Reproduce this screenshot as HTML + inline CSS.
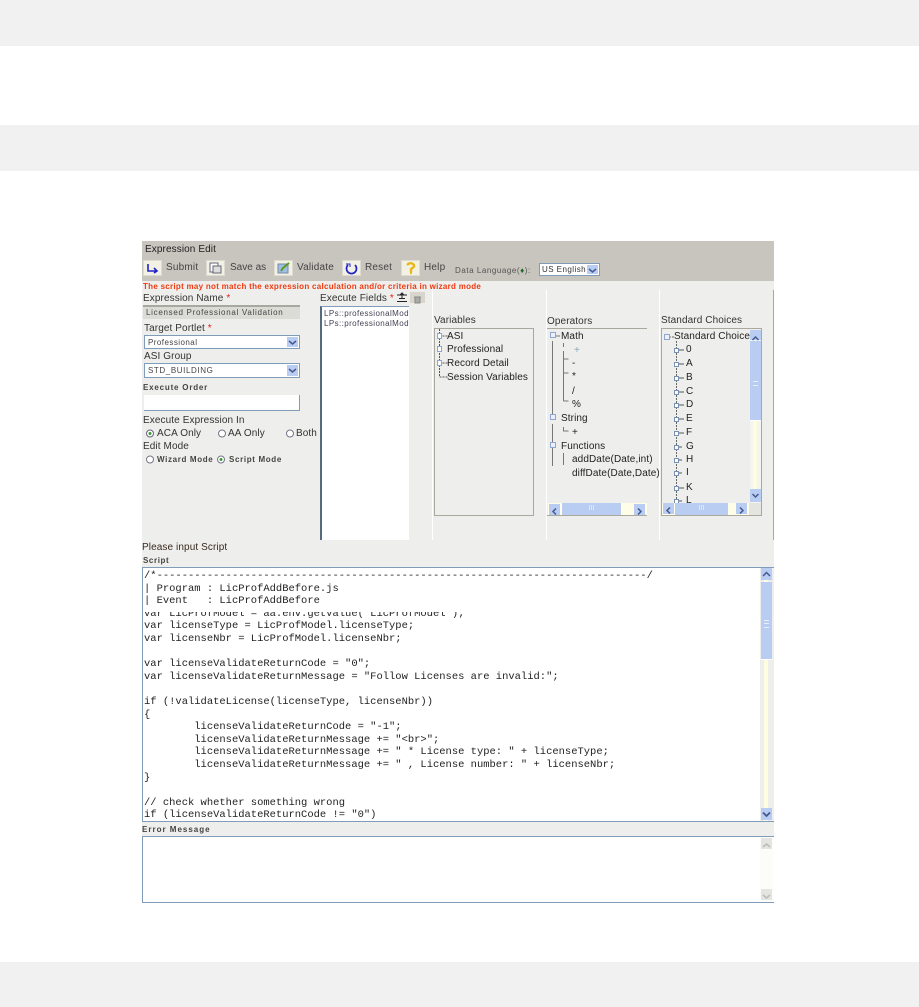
<!DOCTYPE html>
<html><head><meta charset="utf-8">
<style>
html,body{margin:0;padding:0;background:#fff}
body{width:919px;height:1007px;position:relative;overflow:hidden;font-family:"Liberation Sans",sans-serif;color:#333}
.a{position:absolute;white-space:nowrap}
.bar{position:absolute;left:0;width:919px;background:#f1f1f1}
.l{position:absolute;white-space:nowrap;font-size:10px;line-height:12px;color:#333;letter-spacing:.1px}
.s{font-size:8px;color:#444;letter-spacing:.45px}
.b{font-weight:bold;font-size:8px;letter-spacing:.8px;color:#444}
.sel{position:absolute;background:#fff;border:1px solid #7f9db9;box-sizing:border-box}
.arr{position:absolute;right:1px;top:1px;bottom:1px;width:11px;background:#b9ccf2}
.arr svg,.sb svg{position:absolute;left:0;top:0}
.mono{position:absolute;left:144px;font:10.47px/12.6px "Liberation Mono",monospace;color:#222;white-space:pre}
.t{position:absolute;white-space:nowrap;font-size:10px;line-height:12px;color:#222;letter-spacing:.1px}
.v{position:absolute;background:#fff;width:1px}
.btn{position:absolute;top:260px;width:19px;height:16px;background:#f3f1e4;border:1px solid #dedcd0;box-sizing:border-box}
.btn svg{position:absolute;left:0;top:0}
.tb{position:absolute;top:261px;font-size:10px;line-height:14px;color:#444;letter-spacing:.2px;white-space:nowrap}
</style></head><body>
<div class="bar" style="top:0;height:46px"></div>
<div class="bar" style="top:125px;height:46px"></div>
<div class="bar" style="top:962px;height:45px"></div>

<div class="a" style="left:142px;top:241px;width:632px;height:662px;background:#eeeeec"></div>
<div class="a" style="left:142px;top:241px;width:632px;height:40px;background:#c8c4be"></div>
<div class="l" style="left:145px;top:244px;color:#222">Expression Edit</div>

<div class="btn" style="left:143px"><svg width="17" height="14"><path d="M4 3v7h9M10 7l3 3-3 2" fill="none" stroke="#2222cc" stroke-width="1.6"/></svg></div>
<div class="tb" style="left:166px">Submit</div>
<div class="btn" style="left:206px"><svg width="17" height="14"><rect x="3" y="2" width="8" height="9" fill="#fff" stroke="#667"/><rect x="6" y="5" width="8" height="7" fill="#ddd" stroke="#667"/></svg></div>
<div class="tb" style="left:230px;letter-spacing:0">Save as</div>
<div class="btn" style="left:274px"><svg width="17" height="14"><rect x="3" y="3" width="10" height="9" fill="#9fc0e0" stroke="#78a"/><path d="M6 10l2-3 6-5" fill="none" stroke="#5a9a20" stroke-width="2"/></svg></div>
<div class="tb" style="left:297px">Validate</div>
<div class="btn" style="left:342px"><svg width="17" height="14"><path d="M5 4a5 5 0 1 0 7 0" fill="none" stroke="#2222cc" stroke-width="1.7"/><path d="M3 3h4v3" fill="none" stroke="#2222cc"/></svg></div>
<div class="tb" style="left:365px">Reset</div>
<div class="btn" style="left:401px"><svg width="17" height="14"><path d="M5 4q3-3 6-1t-2 5v3" fill="none" stroke="#e8b818" stroke-width="2.4"/><rect x="8" y="11" width="2" height="2" fill="#e8b818"/></svg></div>
<div class="tb" style="left:424px">Help</div>
<div class="a s" style="left:455px;top:265px;line-height:11px;color:#555;letter-spacing:.55px">Data Language(<b style="color:#1a6a2a">♦</b>):</div>
<div class="sel" style="left:539px;top:263px;width:61px;height:13px"><div class="a s" style="left:2px;top:0;line-height:11px;color:#333;width:45px;overflow:hidden">US English</div><div class="arr"><svg width="11" height="11"><path d="M2 4l3.500 3 3.500-3" fill="none" stroke="#445a90" stroke-width="1.500"/></svg></div></div>
<div class="a" style="left:143px;top:281px;font-size:8px;line-height:11px;font-weight:bold;color:#f03a10;letter-spacing:.28px">The script may not match the expression calculation and/or criteria in wizard mode</div>

<div class="l" style="left:143px;top:293px">Expression Name <span style="color:#e02020">*</span></div>
<div class="a s" style="left:143px;top:305px;width:157px;height:14px;background:#dcdcd6;border-top:2px solid #a8a8a0;box-sizing:border-box;padding-left:3px;line-height:12px;letter-spacing:.7px">Licensed Professional Validation</div>
<div class="l" style="left:144px;top:323px">Target Portlet <span style="color:#e02020">*</span></div>
<div class="sel" style="left:144px;top:335px;width:156px;height:14px"><div class="a s" style="left:3px;top:1px;line-height:11px">Professional</div><div class="arr"><svg width="11" height="12"><path d="M2 4l3.500 3 3.500-3" fill="none" stroke="#445a90" stroke-width="1.500"/></svg></div></div>
<div class="l" style="left:144px;top:351px">ASI Group</div>
<div class="sel" style="left:144px;top:363px;width:156px;height:15px"><div class="a s" style="left:3px;top:1px;line-height:12px;letter-spacing:.6px">STD_BUILDING</div><div class="arr"><svg width="11" height="12"><path d="M2 4l3.500 3 3.500-3" fill="none" stroke="#445a90" stroke-width="1.500"/></svg></div></div>
<div class="a b" style="left:143px;top:382px;line-height:11px">Execute Order</div>
<div class="a" style="left:144px;top:395px;width:156px;height:16px;background:#fff;border-right:1px solid #7f9db9;border-bottom:1px solid #7f9db9;box-sizing:border-box"></div>
<div class="l" style="left:143px;top:415px">Execute Expression In</div>
<svg class="a" style="left:145px;top:429px" width="160" height="9"><circle cx="5" cy="4.500" r="3.500" fill="#fff" stroke="#667"/><circle cx="5" cy="4.500" r="1.500" fill="#3a9a3a"/><circle cx="77" cy="4.500" r="3.500" fill="#fff" stroke="#778"/><circle cx="145" cy="4.500" r="3.500" fill="#fff" stroke="#778"/></svg>
<div class="l" style="left:157px;top:428px">ACA Only</div>
<div class="l" style="left:228px;top:428px">AA Only</div>
<div class="l" style="left:296px;top:428px">Both</div>
<div class="l" style="left:143px;top:441px">Edit Mode</div>
<svg class="a" style="left:145px;top:455px" width="90" height="9"><circle cx="5" cy="4.500" r="3.500" fill="#fff" stroke="#778"/><circle cx="76" cy="4.500" r="3.500" fill="#fff" stroke="#778"/><circle cx="76" cy="4.500" r="1.500" fill="#3a9a3a"/></svg>
<div class="a b" style="left:157px;top:454px;line-height:11px;letter-spacing:.65px">Wizard Mode</div>
<div class="a b" style="left:229px;top:454px;line-height:11px;letter-spacing:.65px">Script Mode</div>

<div class="l" style="left:320px;top:293px">Execute Fields <span style="color:#e02020">*</span></div>
<svg class="a" style="left:396px;top:292px" width="13" height="11"><path d="M1 3h10M1 9.500h10M3 6.500h6M6 1v5M4 3l2-2 2 2" fill="none" stroke="#222"/></svg>
<div class="a" style="left:410px;top:292px;width:15px;height:11px;background:#d8d6cc"><svg width="15" height="11"><path d="M5 3h5v6H5zM4 3h7" fill="#aaa" stroke="#888"/></svg></div>
<div class="a" style="left:320px;top:306px;width:89px;height:234px;background:#fff;border-left:2px solid #556a80;border-top:1px solid #7f9db9;box-sizing:border-box;overflow:hidden">
<div class="a s" style="left:2px;top:1px;line-height:12px;letter-spacing:.4px;color:#445">LPs::professionalModel.a</div>
<div class="a s" style="left:2px;top:11px;line-height:12px;letter-spacing:.4px;color:#445">LPs::professionalModel.b</div></div>

<div class="v" style="left:432px;top:290px;height:250px"></div>
<div class="v" style="left:546px;top:290px;height:250px"></div>
<div class="v" style="left:659px;top:290px;height:250px"></div>
<div class="a" style="left:773px;top:290px;width:1px;height:250px;background:#a8a8a0"></div>

<div class="l" style="left:434px;top:315px">Variables</div>
<div class="a" style="left:434px;top:328px;width:100px;height:188px;border:1px solid #a8a89c;box-sizing:border-box"></div>
<svg class="a" style="left:435px;top:329px" width="14" height="60"><path d="M4.500 0v48M4.500 7h8M4.500 34h8M4.500 48h8" fill="none" stroke="#555" stroke-dasharray="2 1"/><rect x="2.500" y="4.500" width="4" height="5" fill="#fff" stroke="#8aa8d0"/><rect x="2.500" y="17.500" width="4" height="5" fill="#fff" stroke="#8aa8d0"/><rect x="2.500" y="31.500" width="4" height="5" fill="#fff" stroke="#8aa8d0"/></svg>
<div class="t" style="left:447px;top:331px">ASI</div>
<div class="t" style="left:447px;top:344px">Professional</div>
<div class="t" style="left:447px;top:358px">Record Detail</div>
<div class="t" style="left:447px;top:372px">Session Variables</div>

<div class="l" style="left:547px;top:316px">Operators</div>
<div class="a" style="left:547px;top:328px;width:100px;height:188px;border-top:1px solid #a8a89c;border-bottom:1px solid #a8a89c;box-sizing:border-box"></div>
<svg class="a" style="left:548px;top:329px" width="30" height="146"><path d="M8 7h4M4.500 12v78M4.500 95v42M15.500 14v4M15.500 22v50M15.500 30h5M15.500 44h5M15.500 72h5M15.500 98v4h5M15.500 124v12" fill="none" stroke="#777"/><rect x="2.500" y="3.500" width="5" height="5" fill="#eef" stroke="#8aa8d0"/><rect x="2.500" y="85.500" width="5" height="5" fill="#eef" stroke="#8aa8d0"/><rect x="2.500" y="113.500" width="5" height="5" fill="#eef" stroke="#8aa8d0"/></svg>
<div class="t" style="left:561px;top:331px">Math</div>
<div class="t" style="left:574px;top:345px;color:#8ab">+</div>
<div class="t" style="left:572px;top:358px">-</div>
<div class="t" style="left:572px;top:371px">*</div>
<div class="t" style="left:572px;top:386px">/</div>
<div class="t" style="left:572px;top:399px">%</div>
<div class="t" style="left:561px;top:413px">String</div>
<div class="t" style="left:572px;top:427px">+</div>
<div class="t" style="left:561px;top:441px">Functions</div>
<div class="t" style="left:572px;top:454px">addDate(Date,int)</div>
<div class="t" style="left:572px;top:468px;width:87px;overflow:hidden">diffDate(Date,Date)</div>
<div class="a" style="left:548px;top:503px;width:99px;height:12px;background:#fffde8"></div>
<div class="a" style="left:549px;top:504px;width:11px;height:11px;background:#b9ccf2"><svg width="11" height="11"><path d="M7 2.500L4 5.500l3 3" fill="none" stroke="#445a90" stroke-width="1.500"/></svg></div>
<div class="a" style="left:561px;top:503px;width:61px;height:12px;background:#b9ccf2;border-left:1px solid #fff;border-right:1px solid #fff;box-sizing:border-box;text-align:center;font-size:7px;line-height:12px;color:#eef">III</div>
<div class="a" style="left:634px;top:504px;width:11px;height:11px;background:#b9ccf2"><svg width="11" height="11"><path d="M4 2.500L7 5.500l-3 3" fill="none" stroke="#445a90" stroke-width="1.500"/></svg></div>

<div class="l" style="left:661px;top:315px">Standard Choices</div>
<div class="a" style="left:661px;top:328px;width:101px;height:188px;border:1px solid #a8a89c;box-sizing:border-box;overflow:hidden">
<div class="t" style="left:12px;top:2px;width:80px;overflow:hidden">Standard Choices</div>
<div class="t" style="left:24px;top:15px">0</div>
<div class="t" style="left:24px;top:29px">A</div>
<div class="t" style="left:24px;top:43px">B</div>
<div class="t" style="left:24px;top:57px">C</div>
<div class="t" style="left:24px;top:70px">D</div>
<div class="t" style="left:24px;top:84px">E</div>
<div class="t" style="left:24px;top:98px">F</div>
<div class="t" style="left:24px;top:112px">G</div>
<div class="t" style="left:24px;top:125px">H</div>
<div class="t" style="left:24px;top:138px">I</div>
<div class="t" style="left:24px;top:153px">K</div>
<div class="t" style="left:24px;top:166px">L</div>
<svg class="a" style="left:0;top:0" width="24" height="176"><path d="M7 8h5M14.500 12v162" fill="none" stroke="#666" stroke-dasharray="2 1"/><path d="M17 21h5M17 35h5M17 49h5M17 63h5M17 76h5M17 90h5M17 104h5M17 118h3M17 131h3M17 144h3M17 159h5M17 172h3" fill="none" stroke="#555"/><path d="M12.500 19.500h4v4h-4zM12.500 33.500h4v4h-4zM12.500 47.500h4v4h-4zM12.500 61.500h4v4h-4zM12.500 74.500h4v4h-4zM12.500 88.500h4v4h-4zM12.500 102.500h4v4h-4zM12.500 116.500h4v4h-4zM12.500 129.500h4v4h-4zM12.500 142.500h4v4h-4zM12.500 157.500h4v4h-4zM12.500 170.500h4v4h-4z" fill="#fff" stroke="#7a90b0"/><rect x="2.500" y="5.500" width="5" height="5" fill="#eef" stroke="#8aa8d0"/></svg>
<div class="a" style="left:88px;top:1px;width:11px;height:173px;background:#f4f4f0"></div>
<div class="a" style="left:91px;top:90px;width:4px;height:70px;background:#fffde0"></div>
<div class="a" style="left:88px;top:1px;width:11px;height:10px;background:#b9ccf2"><svg width="11" height="10"><path d="M2.500 7L5.500 4l3 3" fill="none" stroke="#445a90" stroke-width="1.500"/></svg></div>
<div class="a" style="left:88px;top:12px;width:11px;height:80px;background:#b9ccf2;border-bottom:1px solid #fff;box-sizing:border-box"></div>
<div class="a" style="left:91px;top:52px;width:5px;height:5px;border-top:1px solid #e8eeff;border-bottom:1px solid #e8eeff;box-sizing:border-box"></div>
<div class="a" style="left:88px;top:160px;width:11px;height:13px;background:#b9ccf2"><svg width="11" height="13"><path d="M2.500 5l3 3 3-3" fill="none" stroke="#445a90" stroke-width="1.500"/></svg></div>
<div class="a" style="left:0;top:174px;width:99px;height:12px;background:#fffde8"></div>
<div class="a" style="left:1px;top:174px;width:11px;height:11px;background:#b9ccf2"><svg width="11" height="11"><path d="M7 2.500L4 5.500l3 3" fill="none" stroke="#445a90" stroke-width="1.500"/></svg></div>
<div class="a" style="left:13px;top:174px;width:53px;height:12px;background:#b9ccf2;text-align:center;font-size:7px;line-height:12px;color:#eef">III</div>
<div class="a" style="left:74px;top:174px;width:11px;height:11px;background:#b9ccf2"><svg width="11" height="11"><path d="M4 2.500L7 5.500l-3 3" fill="none" stroke="#445a90" stroke-width="1.500"/></svg></div>
<div class="a" style="left:87px;top:174px;width:12px;height:12px;background:#e4e4e0"></div>
</div>

<div class="l" style="left:142px;top:542px;color:#3a2a20">Please input Script</div>
<div class="a b" style="left:143px;top:555px;line-height:11px;letter-spacing:.6px">Script</div>

<div class="a" style="left:142px;top:567px;width:632px;height:255px;background:#fff;border:1px solid #7f9db9;border-right:0;box-sizing:border-box"></div>
<div class="a" style="left:142px;top:568px;width:620px;height:253px;overflow:hidden">
<div class="mono" style="left:2px;top:2px">/*------------------------------------------------------------------------------/
| Program : LicProfAddBefore.js
| Event   : LicProfAddBefore
var LicProfModel = aa.env.getValue("LicProfModel");
var licenseType = LicProfModel.licenseType;
var licenseNbr = LicProfModel.licenseNbr;

var licenseValidateReturnCode = "0";
var licenseValidateReturnMessage = "Follow Licenses are invalid:";

if (!validateLicense(licenseType, licenseNbr))
{
        licenseValidateReturnCode = "-1";
        licenseValidateReturnMessage += "&lt;br&gt;";
        licenseValidateReturnMessage += " * License type: " + licenseType;
        licenseValidateReturnMessage += " , License number: " + licenseNbr;
}

// check whether something wrong
if (licenseValidateReturnCode != "0")</div>
<div class="a" style="left:2px;top:39px;width:600px;height:5px;background:#fff"></div>
</div>
<div class="a sb" style="left:760px;top:568px;width:14px;height:253px;background:#eeeeec">
<div class="a" style="left:4px;top:0;width:4px;height:253px;background:#fffde0"></div>
<div class="a" style="left:1px;top:0;width:11px;height:12px;background:#b9ccf2"><svg width="11" height="12"><path d="M2 8l3.500-3.500L9 8" fill="none" stroke="#445a90" stroke-width="1.500"/></svg></div>
<div class="a" style="left:1px;top:14px;width:11px;height:78px;background:#b9ccf2;border-bottom:1px solid #fff;box-sizing:border-box"></div>
<div class="a" style="left:4px;top:52px;width:5px;height:1px;background:#e8eeff"></div>
<div class="a" style="left:4px;top:55px;width:5px;height:5px;border-top:1px solid #e8eeff;border-bottom:1px solid #e8eeff;box-sizing:border-box"></div>
<div class="a" style="left:1px;top:240px;width:11px;height:12px;background:#b9ccf2"><svg width="11" height="12"><path d="M2 4.500L5.500 8 9 4.500" fill="none" stroke="#445a90" stroke-width="1.800"/></svg></div>
</div>

<div class="a b" style="left:142px;top:824px;line-height:11px;letter-spacing:1px">Error Message</div>
<div class="a" style="left:142px;top:836px;width:632px;height:67px;background:#fff;border:1px solid #7f9db9;border-right:0;box-sizing:border-box"></div>
<div class="a" style="left:760px;top:837px;width:13px;height:65px;background:#fcfcfa">
<div class="a" style="left:1px;top:1px;width:11px;height:11px;background:#e4e4e0"><svg width="11" height="11"><path d="M2 7l3.500-3L9 7" fill="none" stroke="#bbb" stroke-width="1.500"/></svg></div>
<div class="a" style="left:1px;top:52px;width:11px;height:11px;background:#e4e4e0"><svg width="11" height="11"><path d="M2 4l3.500 3L9 4" fill="none" stroke="#bbb" stroke-width="1.500"/></svg></div>
</div>
</body></html>
